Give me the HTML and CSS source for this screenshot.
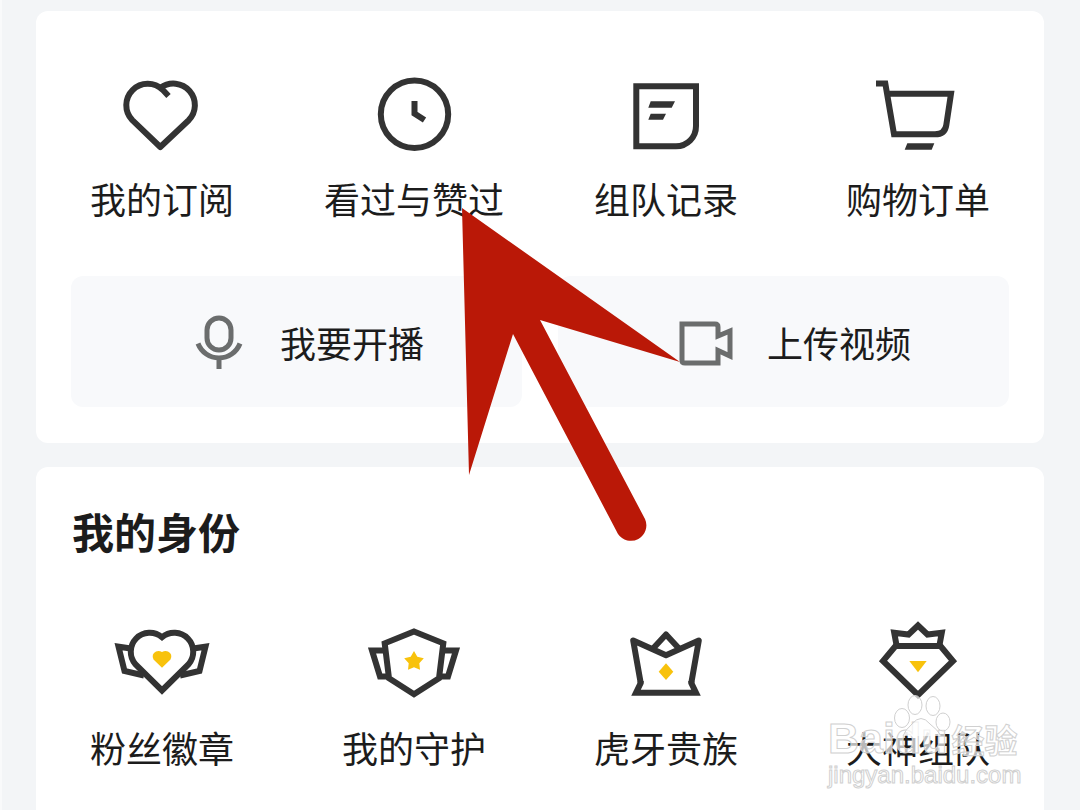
FILE: index.html
```
<!DOCTYPE html>
<html lang="zh-CN">
<head>
<meta charset="utf-8">
<meta name="viewport" content="width=device-width, initial-scale=1">
<title>我的</title>
<link rel="stylesheet" href="styles.css">
</head>
<body>
<main class="page">

<section class="card">
  <nav class="menu">
    <a class="item" href="#">
      <svg class="icon" viewBox="0 0 100 100"><path stroke-linejoin="round" d="M56.5 31L50.7 24.8A21.5 21.5 0 0 0 20.3 55.2L48.3 82L76.7 55.2A21.5 21.5 0 0 0 48.5 22.9"/></svg>
      <span>我的订阅</span>
    </a>
    <a class="item" href="#">
      <svg class="icon" viewBox="0 0 100 100"><circle cx="50.5" cy="49.3" r="33.7"/><path d="M50.5 36V48.5L60.5 55"/></svg>
      <span>看过与赞过</span>
    </a>
    <a class="item" href="#">
      <svg class="icon" viewBox="0 0 100 100"><path d="M20.3 21.3H80V61A20 20 0 0 1 60 81.3H20.3Z"/><path class="solid" d="M34.7 36.3H59L55.7 42.7H32.3ZM34.7 48.7H50L47 54.7H32.3Z"/></svg>
      <span>组队记录</span>
    </a>
    <a class="item" href="#">
      <svg class="icon" viewBox="0 0 100 100"><path d="M8 18.5H17.3L26 69.3H67Q77 69.3 78.3 60L83 28.7H19.5"/><path class="solid" d="M39.3 78.3H66.3L63.7 84.7H36.7Z"/></svg>
      <span>购物订单</span>
    </a>
  </nav>
  <div class="actions">
    <button class="action" type="button">
      <svg class="icon thin" viewBox="0 0 100 100"><rect x="38" y="26" width="24" height="32" rx="12"/><path d="M29 51.5A22.5 22.5 0 0 0 71 51.5M50 66V77"/></svg>
      <span>我要开播</span>
    </button>
    <button class="action" type="button">
      <svg class="icon thin" viewBox="0 0 100 100"><path d="M26 32H59Q62 32 62 35V44L74 39V64L62 58.5V71H29Q26 71 26 68.5Z"/></svg>
      <span>上传视频</span>
    </button>
  </div>
</section>

<section class="card last">
  <h2>我的身份</h2>
  <nav class="menu">
    <a class="item" href="#">
      <svg class="icon" viewBox="0 0 100 100"><path d="M50 23.2A19 19 0 0 0 23.6 50.4L50 76.5L76.4 50.4A19 19 0 0 0 50 23.2Z"/><path d="M19 34.5L6.5 32.7L12.5 57L32 61.5M81 34.5L93.5 32.7L87.5 57L68 61.5"/><path class="gold" d="M50 38Q53 36.5 56 37.5Q61 40 58.5 45.5L50 53.7L41.5 45.5Q39 40 44 37.5Q47 36.5 50 38Z"/></svg>
      <span>粉丝徽章</span>
    </a>
    <a class="item" href="#">
      <svg class="icon" viewBox="0 0 100 100"><path d="M50 17.5L79.3 29.3L75 64.3L50 80.3L25 64.3L20.7 29.3Z"/><path d="M80 36.5H92L84 62.5H76M20 36.5H8L16 62.5H24"/><path class="gold" d="M50 37L53.3 42.8L59.8 44.3L55.3 49.2L56 55.7L50 53.3L44 55.7L44.7 49.2L40.2 44.3L46.7 42.8Z"/></svg>
      <span>我的守护</span>
    </a>
    <a class="item" href="#">
      <svg class="icon" viewBox="0 0 100 100"><path d="M24.7 67V69L20 78.7H80L75.3 69V67"/><path stroke-linejoin="round" d="M24.7 69L17.2 26.5L50 41.3L82.8 26.5L75.3 69M37.5 34L50 20.5L62.5 34"/><path class="gold" d="M50 49.3L57.3 57.7L50 66L42.7 57.7Z"/></svg>
      <span>虎牙贵族</span>
    </a>
    <a class="item" href="#">
      <svg class="icon" viewBox="0 0 100 100"><path d="M27.5 32H72.5L85 47L50 81L15 47Z"/><path d="M28.5 31L26.2 18.7L40.5 20.5L50 11.5L59.5 20.5L73.8 18.7L71.5 31"/><path class="gold" d="M41.3 47H58.7L50 58.3Z"/></svg>
      <span>大神组队</span>
    </a>
  </nav>
</section>

<!-- pointer over the "看过与赞过" entry -->
<svg class="pointer" viewBox="0 0 218 334"><path d="M0 0L218 154L78 112L183 311A15.5 15.5 0 0 1 156 326L51 126L7 267Z"/></svg>

<div class="mark">
  <svg class="paw" viewBox="0 0 60 44"><ellipse cx="10" cy="24" rx="7.5" ry="9.5"/><ellipse cx="23" cy="11" rx="7" ry="9.5"/><ellipse cx="41" cy="12" rx="7" ry="9.5"/><ellipse cx="51" cy="28" rx="7" ry="9"/><path d="M11 42Q13 36 20 30Q29 19 38 30Q46 36 49 42"/></svg>
  <div class="brand"><span>Baidu</span><span class="cn">经验</span></div>
  <div class="site">jingyan.baidu.com</div>
</div>

</main>
</body>
</html>
```
FILE: styles.css
```
* {
	box-sizing: border-box;
}
body {
	margin: 0;
	background: #f3f5f7;
	color: #1c1c1c;
	font-family: "Noto Sans CJK SC", "Liberation Sans", sans-serif;
	font-size: 36px;
	line-height: 46px;
}
.page {
	position: relative;
	display: flex;
	flex-direction: column;
	gap: 24px;
	min-height: 100vh;
	padding: 11px 36px 0;
	overflow: hidden;
	box-shadow: inset 2px 0 #f9fafb;
}
.card {
	background: #fff;
	border-radius: 12px;
	padding: 54px 0 36px;
}
.card.last {
	flex: 1;
	border-radius: 12px 12px 0 0;
	padding-top: 36px;
}
h2 {
	margin: 0 36px 55px;
	font-size: 42px;
	line-height: 56px;
	font-weight: 700;
}

/* icon menus */
.menu {
	display: grid;
	grid-template-columns: repeat(4, 1fr);
}
.item {
	display: flex;
	flex-direction: column;
	align-items: center;
	gap: 10px;
	color: inherit;
	text-decoration: none;
	white-space: nowrap;
}
.icon {
	display: block;
	width: 100px;
	height: 100px;
	fill: none;
	stroke: #333;
	stroke-width: 6;
}
.icon .solid {
	fill: #333;
	stroke: none;
}
.icon .gold {
	fill: #f8c20c;
	stroke: none;
}
.icon.thin {
	stroke: #6b6d6d;
	stroke-width: 5;
}

/* grey buttons */
.actions {
	display: flex;
	gap: 36px;
	margin: 55px 35px 0;
}
.action {
	display: flex;
	flex: 1;
	align-items: center;
	justify-content: center;
	gap: 11px;
	height: 131px;
	padding: 0;
	border: 0;
	border-radius: 12px;
	background: #f8f9fb;
	color: inherit;
	font: inherit;
	white-space: nowrap;
}

.pointer {
	position: absolute;
	left: 462px;
	top: 208px;
	width: 218px;
	height: 334px;
	overflow: visible;
	fill: #ba1807;
	pointer-events: none;
}

/* watermark */
.mark {
	position: absolute;
	right: 58px;
	bottom: 22px;
	width: 194px;
	color: rgba(255, 255, 255, .7);
	font-family: "Liberation Sans", "Noto Sans CJK SC", sans-serif;
	-webkit-text-stroke: 1px #d0d0d0;
	white-space: nowrap;
	pointer-events: none;
}
.brand {
	display: flex;
	align-items: baseline;
	gap: 4px;
	font-size: 43px;
	line-height: 40px;
	font-weight: 700;
}
.cn {
	font-size: 33px;
}
.site {
	font-size: 24px;
	line-height: 26px;
}
.paw {
	position: absolute;
	left: 64px;
	top: -24px;
	width: 60px;
	height: 44px;
	fill: rgba(255, 255, 255, .7);
	stroke: #d0d0d0;
	stroke-width: 1;
}
```
